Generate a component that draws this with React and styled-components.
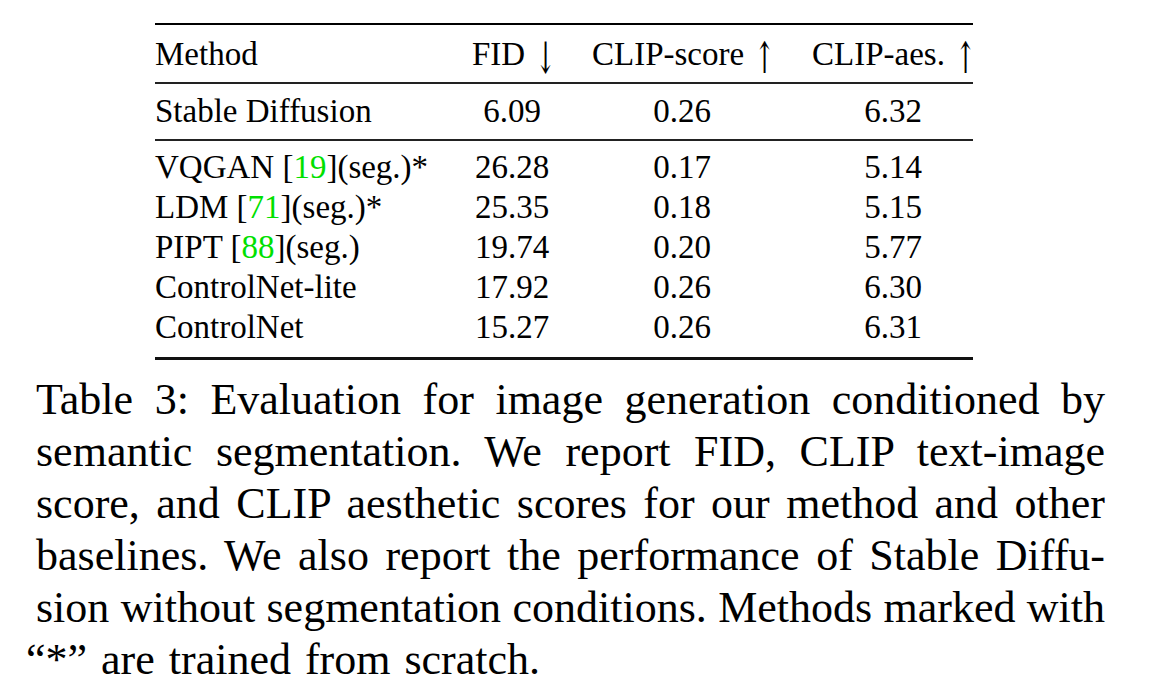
import React from 'react';
import styled, { createGlobalStyle } from 'styled-components';

const GlobalStyle = createGlobalStyle`
    html, body {
        margin: 0;
        padding: 0;
        background: #ffffff;
    }
    body {
        font-family: "Liberation Serif", "Times New Roman", serif;
        color: #000000;
    }
`

const header = ['Method', ['FID', '↓'], ['CLIP-score', '↑'], ['CLIP-aes.', '↑']];

const baseline = [['Stable Diffusion', '6.09', '0.26', '6.32']];

const rows = [
    [['VQGAN [', '19', '](seg.)*'], '26.28', '0.17', '5.14'],
    [['LDM [', '71', '](seg.)*'], '25.35', '0.18', '5.15'],
    [['PIPT [', '88', '](seg.)'], '19.74', '0.20', '5.77'],
    [['ControlNet-lite'], '17.92', '0.26', '6.30'],
    [['ControlNet'], '15.27', '0.26', '6.31'],
];

const caption = [
    'Table 3: Evaluation for image generation conditioned by',
    'semantic segmentation. We report FID, CLIP text-image',
    'score, and CLIP aesthetic scores for our method and other',
    'baselines. We also report the performance of Stable Diffu-',
    'sion without segmentation conditions. Methods marked with',
];

function MethodName({ parts })
{
    if (parts.length === 1) return parts[0];
    return (
        <>
            {parts[0]}<Cite>{parts[1]}</Cite>{parts[2]}
        </>
    );
}

function HeadLabel({ value })
{
    if (!Array.isArray(value)) return value;
    return (
        <>
            {value[0]} <Arrow>{value[1]}</Arrow>
        </>
    );
}

function Group({ data, $top, $bottom, method, head })
{
    return (
        <Grid $top={$top} $bottom={$bottom}>
            {data.map((row, i) => (
                <React.Fragment key={i}>
                    <Cell $left>{method ? <MethodName parts={row[0]} /> : row[0]}</Cell>
                    {row.slice(1).map((v, j) => (
                        <Cell key={j}>{head ? <HeadLabel value={v} /> : v}</Cell>
                    ))}
                </React.Fragment>
            ))}
        </Grid>
    );
}

function App()
{
    return (
        <Page>
            <GlobalStyle />
            <Table>
                <Rule $size={2} />
                <Group data={[header]} $top={9} $bottom={8} head />
                <Rule $size={2} $color="#222" />
                <Group data={baseline} $top={7} $bottom={8} />
                <Rule $size={2} $color="#222" />
                <Group data={rows} $top={6} $bottom={10} method />
                <Rule $size={3} $color="#111" />
            </Table>
            <Caption>
                {caption.map((line, i) => (
                    <CaptionLine key={i}>{line}</CaptionLine>
                ))}
                <CaptionLine $last>“*” are trained from scratch.</CaptionLine>
            </Caption>
        </Page>
    );
}

export default App;

const Page = styled.div`
    width: 1157px;
    height: 700px;
    padding-top: 23px;
    box-sizing: border-box;
    overflow: hidden;
`

const Table = styled.div`
    margin-left: 155px;
    width: 818px;
`

const Rule = styled.div`
    height: ${p => p.$size}px;
    background: ${p => p.$color || '#000'};
`

const Grid = styled.div`
    display: grid;
    grid-template-columns: 277px 80px 180px 162px;
    column-gap: 40px;
    padding: ${p => p.$top}px 0 ${p => p.$bottom}px;
    font-size: 33px;
    line-height: 40px;
`

const Cell = styled.div`
    text-align: ${p => (p.$left ? 'left' : 'center')};
    white-space: nowrap;
`

const Arrow = styled.span`
    font-family: "DejaVu Serif", "Liberation Serif", serif;
    font-size: 30px;
    line-height: 0;
    display: inline-block;
    transform: scale(0.8, 1.45);
    vertical-align: -3px;
`

const Cite = styled.span`
    color: #00e000;
`

const Caption = styled.div`
    margin: 14px 0 0 36px;
    width: 1069px;
    font-size: 44px;
    line-height: 52px;
`

const CaptionLine = styled.div`
    text-align: justify;
    text-align-last: ${p => (p.$last ? 'left' : 'justify')};
    margin-left: ${p => (p.$last ? '-10px' : '0')};
    word-spacing: ${p => (p.$last ? '3px' : 'normal')};
    white-space: nowrap;
`
